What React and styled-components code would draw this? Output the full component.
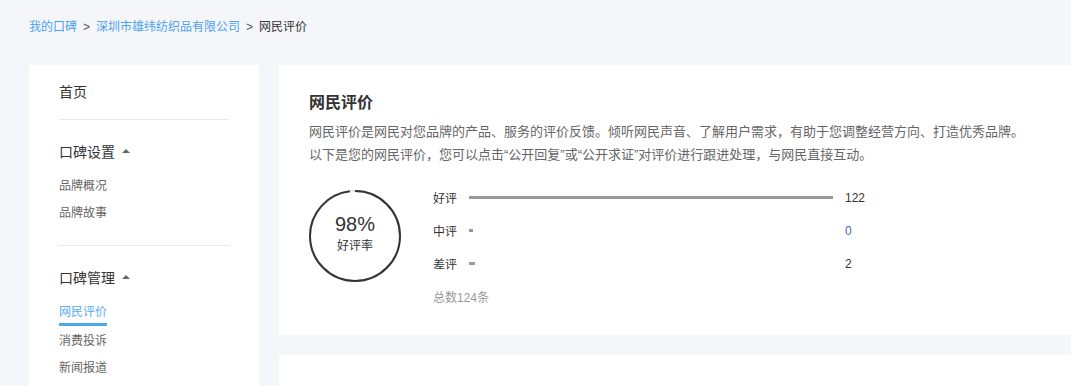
import React from "react";
import styled, { createGlobalStyle } from "styled-components";

const Global = createGlobalStyle`
  html, body { margin: 0; padding: 0; background: #f5f6fa; }
  body { font-family: "Liberation Sans", "Noto Sans CJK SC", sans-serif; color: #333; }
  * { box-sizing: border-box; }
`;

const Page = styled.div`
  min-height: 386px;
  overflow: hidden;
`;

const Breadcrumb = styled.div`
  height: 65px;
  padding: 19px 0 0 29px;
  font-size: 12px;
  line-height: 16px;
  display: flex;
  gap: 6px;
`;

const Crumb = styled.span`
  color: ${(p) => (p.$link ? "#4aa3f0" : "#333")};
`;

const Sep = styled.span`
  color: #555;
`;

const Body = styled.div`
  display: flex;
  gap: 20px;
  padding-left: 29px;
  align-items: flex-start;
`;

const Sidebar = styled.nav`
  width: 230px;
  flex: none;
  background: #fff;
  padding: 0 30px;
  min-height: 400px;
`;

const Home = styled.div`
  font-size: 14px;
  line-height: 20px;
  padding: 17px 0 17px;
  border-bottom: 1px solid #e9e9ee;
`;

const Section = styled.div`
  padding: 22px 0 ${(p) => p.$pb || 0}px;
  border-bottom: ${(p) => (p.$last ? "none" : "1px solid #e9e9ee")};
`;

const Heading = styled.div`
  font-size: 14px;
  line-height: 20px;
  display: flex;
  align-items: center;
`;

const Caret = styled.span`
  margin-left: 7px;
  width: 0;
  height: 0;
  border-left: 4px solid transparent;
  border-right: 4px solid transparent;
  border-bottom: 4px solid #666;
  margin-top: -2px;
`;

const SubList = styled.div`
  padding-top: 10px;
`;

const SubItem = styled.div`
  height: 27px;
  display: flex;
  align-items: center;
  font-size: 12px;
  color: ${(p) => (p.$active ? "#5aabf0" : "#666")};
  margin-bottom: ${(p) => (p.$active ? "2px" : "0")};
`;

const SubLabel = styled.span`
  position: relative;
  line-height: 14px;
  ${(p) =>
    p.$active &&
    `
    &::after {
      content: "";
      position: absolute;
      left: 0;
      right: 0;
      top: 18px;
      height: 3px;
      background: #4aa8ec;
    }
  `}
`;

const Main = styled.div`
  flex: 1;
  display: flex;
  flex-direction: column;
  gap: 20px;
`;

const Card = styled.section`
  background: #fff;
  padding: 28px 30px 22px;
  min-height: ${(p) => p.$minH || 0}px;
`;

const Title = styled.h2`
  margin: 0;
  font-size: 16px;
  line-height: 20px;
  font-weight: bold;
  color: #333;
`;

const Desc = styled.p`
  margin: 7px 0 0;
  font-size: 13px;
  line-height: 23px;
  color: #666;
  white-space: nowrap;
`;

const Stats = styled.div`
  display: flex;
  margin-top: 15px;
  gap: 32px;
`;

const Ring = styled.div`
  position: relative;
  width: 92px;
  height: 92px;
  margin-top: 9px;
  flex: none;
  display: flex;
  flex-direction: column;
  align-items: center;
  justify-content: center;
`;

const RingSvg = styled.svg`
  position: absolute;
  inset: 0;
`;

const Percent = styled.div`
  font-size: 20px;
  line-height: 24px;
  color: #333;
  margin-top: -6px;
`;

const RateLabel = styled.div`
  font-size: 12px;
  line-height: 16px;
  color: #333;
  margin-top: 2px;
`;

const Rows = styled.div`
  display: flex;
  flex-direction: column;
`;

const Row = styled.div`
  height: 33px;
  display: flex;
  align-items: center;
  font-size: 12px;
`;

const RowLabel = styled.span`
  width: 36px;
  color: #333;
`;

const Track = styled.div`
  width: 370px;
  margin-right: 6px;
  height: 3px;
`;

const Fill = styled.div`
  height: 3px;
  background: #999;
`;

const Count = styled.span`
  color: ${(p) => (p.$zero ? "#4a5fc1" : "#333")};
`;

const Total = styled.div`
  height: 33px;
  display: flex;
  align-items: center;
  font-size: 12px;
  color: #999;
`;

const data = [
  { label: "好评", n: 122 },
  { label: "中评", n: 0 },
  { label: "差评", n: 2 },
];
const total = 124;

function RingChart({ pct }) {
  const r = 45;
  const c = 2 * Math.PI * r;
  return (
    <Ring>
      <RingSvg width="92" height="92" viewBox="0 0 92 92">
        <circle cx="46" cy="46" r={r} fill="none" stroke="#e4e4e4" strokeWidth="2" />
        <circle
          cx="46"
          cy="46"
          r={r}
          fill="none"
          stroke="#333"
          strokeWidth="2"
          strokeDasharray={`${(c * pct) / 100} ${c}`}
          transform="rotate(-90 46 46)"
        />
      </RingSvg>
      <Percent>{pct}%</Percent>
      <RateLabel>好评率</RateLabel>
    </Ring>
  );
}

export default function App() {
  return (
    <Page>
      <Global />
      <Breadcrumb>
        <Crumb $link>我的口碑</Crumb>
        <Sep>&gt;</Sep>
        <Crumb $link>深圳市雄纬纺织品有限公司</Crumb>
        <Sep>&gt;</Sep>
        <Crumb>网民评价</Crumb>
      </Breadcrumb>
      <Body>
        <Sidebar>
          <Home>首页</Home>
          <Section $pb={19}>
            <Heading>
              口碑设置
              <Caret />
            </Heading>
            <SubList>
              <SubItem><SubLabel>品牌概况</SubLabel></SubItem>
              <SubItem><SubLabel>品牌故事</SubLabel></SubItem>
            </SubList>
          </Section>
          <Section $last>
            <Heading>
              口碑管理
              <Caret />
            </Heading>
            <SubList>
              <SubItem $active><SubLabel $active>网民评价</SubLabel></SubItem>
              <SubItem><SubLabel>消费投诉</SubLabel></SubItem>
              <SubItem><SubLabel>新闻报道</SubLabel></SubItem>
            </SubList>
          </Section>
        </Sidebar>
        <Main>
          <Card>
            <Title>网民评价</Title>
            <Desc>
              网民评价是网民对您品牌的产品、服务的评价反馈。倾听网民声音、了解用户需求，有助于您调整经营方向、打造优秀品牌。
              <br />
              以下是您的网民评价，您可以点击“公开回复”或“公开求证”对评价进行跟进处理，与网民直接互动。
            </Desc>
            <Stats>
              <RingChart pct={98} />
              <Rows>
                {data.map((d) => (
                  <Row key={d.label}>
                    <RowLabel>{d.label}</RowLabel>
                    <Track>
                      <Fill style={{ width: Math.max(4, (d.n / total) * 370) }} />
                    </Track>
                    <Count $zero={d.n === 0}>{d.n}</Count>
                  </Row>
                ))}
                <Total>总数{total}条</Total>
              </Rows>
            </Stats>
          </Card>
          <Card $minH={200} />
        </Main>
      </Body>
    </Page>
  );
}
